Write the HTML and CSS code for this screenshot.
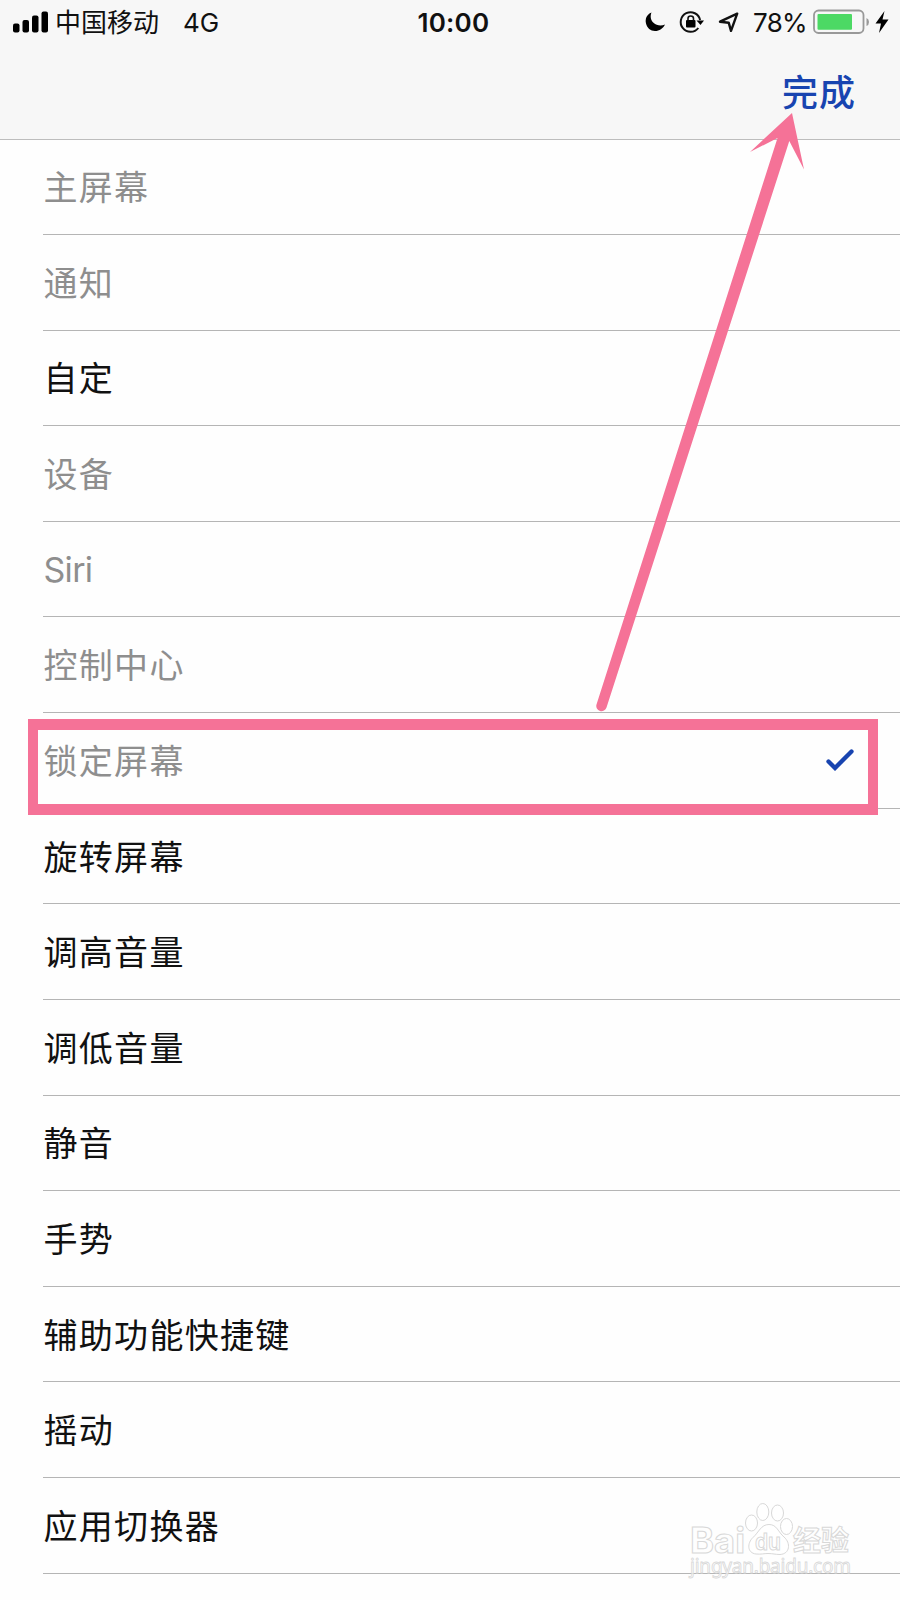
FILE: index.html
```html
<!DOCTYPE html>
<html lang="zh-CN">
<head>
<meta charset="utf-8">
<title>自定</title>
<link rel="stylesheet" href="styles.css">
</head>
<body>
<div class="screen">
  <header class="header">
    <div class="status">
      <div class="status-left">
        <svg class="signal" width="35" height="22" viewBox="0 0 35 22">
          <rect x="0" y="12.500" width="6.500" height="9" rx="2"/><rect x="9.500" y="9" width="6.500" height="12.500" rx="2"/><rect x="19" y="4.500" width="6.500" height="17" rx="2"/><rect x="28.500" y="0.500" width="6.500" height="21" rx="2"/>
        </svg>
        <span class="carrier">中国移动</span>
        <span class="network">4G</span>
      </div>
      <div class="time">10:00</div>
      <div class="status-right">
        <svg class="icons" width="96" height="24" viewBox="645 10 96 24">
          <path d="M651.500 12.500C646.500 14.500 645 19 646 23.500C647 28 650.500 31 655 31C659.500 31 663 28.500 665 24.500C661 26.300 656.500 25.500 653.500 22.800C650.500 20 650 16 651.500 12.500Z"/>
          <path class="line" d="M698.300 28A9.800 9.800 0 1 1 700.100 20"/>
          <path d="M696.500 20.500H704L700.500 25Z"/>
          <rect x="686" y="20" width="9.500" height="7.500" rx="1"/>
          <path class="line thin" d="M688 20.500V18.500Q688 16 690.700 16Q693.500 16 693.500 18.500V20.500"/>
          <path class="line point" d="M737.200 13.700L720 21.700L728.700 22.700L731 30.800Z"/>
        </svg>
        <span class="percent">78%</span>
        <svg class="battery" width="76" height="26" viewBox="813 8 76 26">
          <rect class="case" x="814" y="10.500" width="49.500" height="22.500" rx="4.500"/>
          <rect class="charge" x="817.500" y="14" width="34.500" height="15.800" rx="1"/>
          <path class="cap" d="M866.500 18Q869 19 869 22Q869 25 866.500 26Z"/>
          <path d="M884.500 11L875.500 23.500H881L879 33L888.500 19.500H882.500Z"/>
        </svg>
      </div>
    </div>
    <div class="nav"><span class="done">完成</span></div>
  </header>
  <main class="list">
    <div class="row muted">主屏幕</div>
    <div class="row muted">通知</div>
    <div class="row">自定</div>
    <div class="row muted">设备</div>
    <div class="row muted siri">Siri</div>
    <div class="row muted">控制中心</div>
    <div class="row muted"><span>锁定屏幕</span>
      <svg class="check" width="28" height="24" viewBox="0 0 28 24"><path d="M2.500 14.500L9 21L25.500 4.500"/></svg>
    </div>
    <div class="row">旋转屏幕</div>
    <div class="row">调高音量</div>
    <div class="row">调低音量</div>
    <div class="row">静音</div>
    <div class="row">手势</div>
    <div class="row">辅助功能快捷键</div>
    <div class="row">摇动</div>
    <div class="row">应用切换器</div>
  </main>
  <div class="highlight"></div>
  <svg class="arrow" width="220" height="610" viewBox="590 105 220 610">
    <path d="M792 113L804 169.500L789.300 141L606.500 707.500A5.200 5.200 0 0 1 596.500 704.500L777.500 138L750 152Z"/>
  </svg>
  <svg class="watermark" width="190" height="85" viewBox="680 1500 190 85">
    <text class="brand" x="690" y="1553" textLength="55" lengthAdjust="spacingAndGlyphs">Bai</text>
    <ellipse cx="751.500" cy="1523" rx="6" ry="8"/><ellipse cx="762.800" cy="1512" rx="6" ry="8.500"/><ellipse cx="777.500" cy="1513" rx="6" ry="8"/><ellipse cx="786.500" cy="1526.500" rx="6" ry="8"/>
    <path d="M769 1524.500C777 1524.500 778 1532 784 1537C791 1543 790 1554 780 1554.500C775 1554.500 773 1553.500 768 1553.500C764 1553.500 761 1554.500 756 1554C747 1553 747 1543 753 1537.500C759 1532 761 1524.500 769 1524.500Z"/>
    <text class="du" x="755" y="1549.500" textLength="26" lengthAdjust="spacingAndGlyphs">du</text>
    <text class="exp" x="793" y="1551" textLength="56">经验</text>
    <text class="site" x="690" y="1573" textLength="161">jingyan.baidu.com</text>
  </svg>
</div>
</body>
</html>
```
FILE: styles.css
```css
body { margin: 0; background: #fefefe; }
.screen {
  position: relative;
  width: 900px;
  height: 1600px;
  overflow: hidden;
  font-family: Inter, "Noto Sans CJK SC", sans-serif;
  color: #111;
}
.header {
  box-sizing: border-box;
  height: 140px;
  background: #f7f7f7;
  border-bottom: 1px solid #bdbdbd;
}
.status {
  display: grid;
  grid-template-columns: 417.500px 1fr auto;
  height: 46px;
  padding-right: 11px;
  font-size: 26px;
  line-height: 46px;
}
.status-left, .status-right { display: flex; }
.signal { margin: 11px 7px 0 13px; }
.carrier { width: 128px; font-family: "Noto Sans CJK SC", sans-serif; font-size: 26px; line-height: 42px; }
.time { font-weight: 600; letter-spacing: 0.2px; }
.icons { margin-top: 10px; }
.icons .line { fill: none; stroke: #111; stroke-width: 2; }
.icons .thin { stroke-width: 1.600; }
.icons .point { stroke-width: 2.400; stroke-linejoin: round; }
.percent { width: 60px; margin-left: 12px; letter-spacing: -0.7px; }
.battery { margin-top: 8px; }
.battery .case { fill: none; stroke: #999; stroke-width: 1.800; }
.battery .charge { fill: #4cd964; }
.battery .cap { fill: #999; }
.nav { display: flex; justify-content: flex-end; padding-right: 44px; }
.done {
  font-family: "Noto Sans CJK SC", sans-serif;
  font-size: 36px;
  font-weight: 500;
  letter-spacing: 1px;
  line-height: 88px;
  color: #1844b0;
}
.list { margin-top: -0.700px; padding-left: 43px; }
.row {
  box-sizing: border-box;
  display: flex;
  align-items: center;
  justify-content: space-between;
  height: 95.640px;
  padding: 0 46px 2px 0.500px;
  border-bottom: 1px solid #b5b5b5;
  font-family: "Noto Sans CJK SC", sans-serif;
  font-size: 34px;
  letter-spacing: 1.300px;
}
.muted { color: #8e8e8e; }
.siri { font-family: Inter, sans-serif; letter-spacing: -0.7px; padding-bottom: 0; }
.check { fill: none; stroke: #1844b0; stroke-width: 4.300; stroke-linecap: round; }
.highlight {
  position: absolute;
  left: 28px;
  top: 719px;
  box-sizing: border-box;
  width: 850px;
  height: 96px;
  border: solid #f57297;
  border-width: 11px 10px;
}
.arrow { position: absolute; left: 590px; top: 105px; fill: #f57297; }
.watermark {
  position: absolute;
  left: 680px;
  top: 1500px;
  fill: rgba(255, 255, 255, 0.7);
  stroke: #d8d8d8;
  stroke-width: 1;
  font-family: Inter, "Noto Sans CJK SC", sans-serif;
}
.watermark .brand { font-size: 35px; font-weight: 700; }
.watermark .du { font-size: 23px; font-weight: 600; }
.watermark .exp { font-size: 28px; font-weight: 700; }
.watermark .site { font-family: "Noto Sans", sans-serif; font-size: 19px; stroke-width: 0.800; }
```
